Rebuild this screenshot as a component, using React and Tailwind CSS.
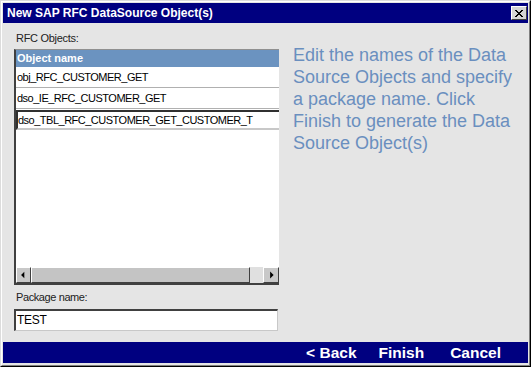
import React from "react";

function ArrowLeft() {
  return (
    <svg width="16" height="16" viewBox="0 0 16 16">
      <polygon points="5,8 9,4 9,12" fill="#000" />
    </svg>
  );
}
function ArrowRight() {
  return (
    <svg width="16" height="16" viewBox="0 0 16 16">
      <polygon points="11,8 7,4 7,12" fill="#000" />
    </svg>
  );
}

export default function App() {
  return (
    <div
      className="w-[531px] h-[367px] border border-t-[#dcdcdc] border-l-[#dcdcdc] border-r-black border-b-black bg-[#e5e5e5]"
      style={{ fontFamily: '"Liberation Sans", Arial, sans-serif' }}
    >
      <div className="h-full w-full border border-t-white border-l-white border-r-[#808080] border-b-[#808080] p-[1px] pb-[2px] flex flex-col">
        {/* Title bar */}
        <div className="h-[20px] bg-[#000080] flex items-center justify-between pl-[4px] pr-[1px]">
          <span className="text-white font-bold text-[12px] leading-none">
            New SAP RFC DataSource Object(s)
          </span>
          <div className="w-[16px] h-[14px] bg-[#d4d4d4] border border-t-white border-l-white border-r-[#404040] border-b-[#404040] flex items-center justify-center">
            <svg width="10" height="9" viewBox="0 0 10 9">
              <path d="M1 1 L8 8 M2 1 L9 8 M8 1 L1 8 M9 1 L2 8" stroke="#000" strokeWidth="1" />
            </svg>
          </div>
        </div>

        {/* Body */}
        <div className="flex-1 flex pl-[11px]">
          {/* left column */}
          <div className="w-[265px] flex flex-col pt-[9px]">
            <div className="text-[11px] leading-[13px] text-[#222] tracking-[-0.3px] pl-[2px]">RFC Objects:</div>
            <div className="mt-[4px] h-[236px] border-l-2 border-l-[#404040] border-b-2 border-b-[#404040] border-t border-t-[#909090] bg-white flex flex-col">
              <div className="h-[17px] bg-[#6b93c0] text-white font-bold text-[11px] leading-[17px] pl-[1px]">
                Object name
              </div>
              <div className="h-[21px] border-b border-[#b0b0b0] text-[11px] leading-[20px] tracking-[-0.5px] pl-[1px] text-black">
                obj_RFC_CUSTOMER_GET
              </div>
              <div className="h-[21px] border-b border-[#b0b0b0] text-[11px] leading-[20px] tracking-[-0.5px] pl-[1px] text-black">
                dso_IE_RFC_CUSTOMER_GET
              </div>
              <div className="mt-[1px] h-[20px] border-t-2 border-l-2 border-[#303030] border-b-2 border-b-[#c8c8c8] text-[11px] leading-[16px] tracking-[-0.5px] text-black">
                dso_TBL_RFC_CUSTOMER_GET_CUSTOMER_T
              </div>
              <div className="flex-1" />
              {/* scrollbar */}
              <div className="h-[16px] flex bg-[#e0e0e0]">
                <div className="w-[15px] h-[16px] bg-[#c8c8c8] border border-t-white border-l-white border-r-[#404040] border-b-[#404040] flex items-center justify-center">
                  <ArrowLeft />
                </div>
                <div className="w-[219px] h-[16px] bg-[#c4c4c4] border border-t-white border-l-white border-r-[#404040] border-b-[#404040]" />
                <div className="flex-1" />
                <div className="w-[16px] h-[16px] bg-[#c8c8c8] border border-t-white border-l-white border-r-[#404040] border-b-[#404040] flex items-center justify-center">
                  <ArrowRight />
                </div>
              </div>
            </div>
            <div className="mt-[6px] text-[11px] leading-[13px] text-[#222] tracking-[-0.4px] pl-[2px]">Package name:</div>
            <div className="mt-[5px] h-[22px] w-[264px] bg-white border-t-2 border-l-2 border-[#404040] border-b border-r border-b-[#c8c8c8] border-r-[#c8c8c8] text-[12px] leading-[18px] tracking-[-0.3px] text-black pl-[1px]">
              TEST
            </div>
          </div>

          {/* right text */}
          <div className="ml-[14px] pt-[21px] text-[18px] leading-[22px] text-[#6a8fbf] whitespace-nowrap">
            Edit the names of the Data
            <br />
            Source Objects and specify
            <br />
            a package name. Click
            <br />
            Finish to generate the Data
            <br />
            Source Object(s)
          </div>
        </div>

        {/* Bottom bar */}
        <div className="h-[21px] bg-[#000080] flex items-center justify-end pr-[27px] text-white font-bold text-[15.5px] leading-none">
          <span>&lt; Back</span>
          <span className="ml-[22px]">Finish</span>
          <span className="ml-[26px]">Cancel</span>
        </div>
      </div>
    </div>
  );
}
